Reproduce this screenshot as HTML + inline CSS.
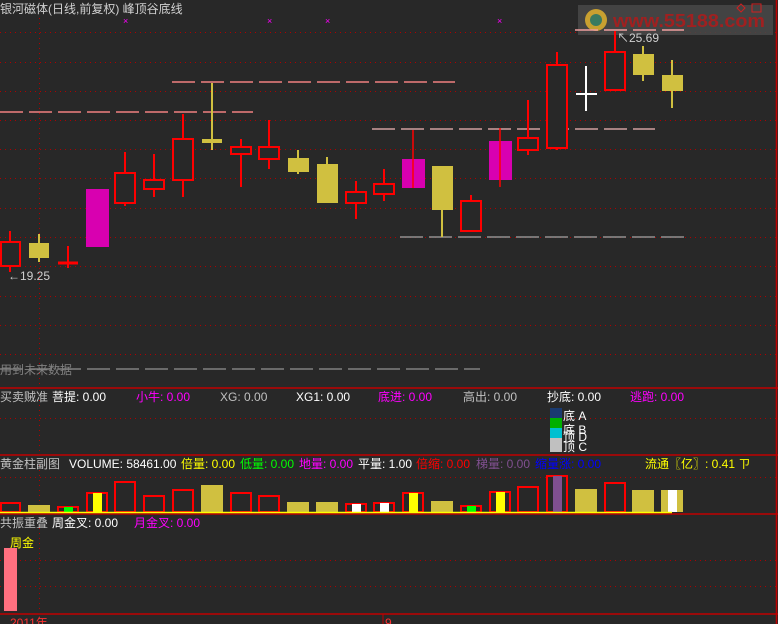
<!DOCTYPE html>
<html><head><meta charset="utf-8"><style>
html,body{margin:0;padding:0;background:#282828;width:778px;height:624px;overflow:hidden}
svg{display:block}
text{font-family:"Liberation Sans","Noto Sans CJK SC",sans-serif;font-size:12px}
</style></head><body>
<svg width="778" height="624" xmlns="http://www.w3.org/2000/svg">
<rect width="778" height="624" fill="#282828"/>
<g stroke="#b00000" stroke-width="1" stroke-dasharray="1,4">
<line x1="0" y1="32.5" x2="776" y2="32.5"/>
<line x1="0" y1="62.5" x2="776" y2="62.5"/>
<line x1="0" y1="91.5" x2="776" y2="91.5"/>
<line x1="0" y1="120.5" x2="776" y2="120.5"/>
<line x1="0" y1="149.5" x2="776" y2="149.5"/>
<line x1="0" y1="178.5" x2="776" y2="178.5"/>
<line x1="0" y1="208.5" x2="776" y2="208.5"/>
<line x1="0" y1="237.5" x2="776" y2="237.5"/>
<line x1="0" y1="266.5" x2="776" y2="266.5"/>
<line x1="0" y1="296.5" x2="776" y2="296.5"/>
<line x1="0" y1="325.5" x2="776" y2="325.5"/>
<line x1="0" y1="354.5" x2="776" y2="354.5"/>
<line x1="0" y1="418.5" x2="776" y2="418.5"/>
<line x1="0" y1="477.5" x2="776" y2="477.5"/>
<line x1="0" y1="560.5" x2="776" y2="560.5"/>
<line x1="0" y1="586.5" x2="776" y2="586.5"/>
<line x1="39.5" y1="18" x2="39.5" y2="388"/>
<line x1="39.5" y1="400" x2="39.5" y2="455"/>
<line x1="39.5" y1="465" x2="39.5" y2="512"/>
<line x1="39.5" y1="528" x2="39.5" y2="612"/>
</g>
<g stroke="#c00000" stroke-width="1.5">
<line x1="0" y1="388" x2="778" y2="388"/>
<line x1="0" y1="455" x2="778" y2="455"/>
<line x1="0" y1="514" x2="778" y2="514"/>
<line x1="0" y1="614" x2="778" y2="614"/>
<line x1="776.5" y1="0" x2="776.5" y2="624"/>
</g>
<rect x="578" y="5" width="195" height="30" fill="#484848" opacity="0.85"/>
<circle cx="596" cy="20" r="11" fill="#c8a030"/>
<circle cx="596" cy="20" r="6" fill="#3a7a60"/>
<text x="613" y="27" fill="#a02020" textLength="152" lengthAdjust="spacingAndGlyphs" style="font-size:18px;font-weight:bold">www.55188.com</text>
<rect x="752" y="4" width="9" height="8" fill="none" stroke="#d02020"/>
<path d="M741 4 l4 4 -4 4 -4 -4z" fill="none" stroke="#d02020"/>
<g stroke-width="1.5" stroke-dasharray="23,6">
<line x1="172" y1="82" x2="455" y2="82" stroke="#f08080"/>
<line x1="0" y1="112" x2="253" y2="112" stroke="#f08080"/>
<line x1="372" y1="129" x2="655" y2="129" stroke="#d0a0a0"/>
<line x1="400" y1="237" x2="684" y2="237" stroke="#909090"/>
<line x1="575" y1="30" x2="684" y2="30" stroke="#f0a0a0"/>
<line x1="0" y1="369" x2="480" y2="369" stroke="#808080"/>
</g>
<g fill="#ff00ff"><text x="123" y="24" style="font-size:9px">×</text><text x="267" y="24" style="font-size:9px">×</text><text x="325" y="24" style="font-size:9px">×</text><text x="497" y="24" style="font-size:9px">×</text></g>
<g stroke="#ff0000" stroke-width="2" fill="none">
<line x1="10" y1="231" x2="10" y2="272"/><rect x="1" y="242" width="19" height="24" fill="#282828"/>
<line x1="68" y1="246" x2="68" y2="268"/><line x1="58" y1="263" x2="78" y2="263" stroke-width="3"/>
<line x1="125" y1="152" x2="125" y2="206"/><rect x="115" y="173" width="20" height="30" fill="#282828"/>
<line x1="154" y1="154" x2="154" y2="197"/><rect x="144" y="180" width="20" height="9" fill="#282828"/>
<line x1="183" y1="114" x2="183" y2="197"/><rect x="173" y="139" width="20" height="41" fill="#282828"/>
<line x1="241" y1="139" x2="241" y2="187"/><rect x="231" y="147" width="20" height="7" fill="#282828"/>
<line x1="269" y1="120" x2="269" y2="169"/><rect x="259" y="147" width="20" height="12" fill="#282828"/>
<line x1="356" y1="181" x2="356" y2="219"/><rect x="346" y="192" width="20" height="11" fill="#282828"/>
<line x1="384" y1="169" x2="384" y2="201"/><rect x="374" y="184" width="20" height="10" fill="#282828"/>
<line x1="471" y1="195" x2="471" y2="201"/><rect x="461" y="201" width="20" height="30" fill="#282828"/>
<line x1="528" y1="100" x2="528" y2="155"/><rect x="518" y="138" width="20" height="12" fill="#282828"/>
<line x1="557" y1="52" x2="557" y2="150"/><rect x="547" y="65" width="20" height="83" fill="#282828"/>
<line x1="615" y1="31" x2="615" y2="52"/><rect x="605" y="52" width="20" height="38" fill="#282828"/>
</g>
<g fill="#d0c040" stroke="#d0c040" stroke-width="2">
<line x1="39" y1="234" x2="39" y2="262"/><rect x="29" y="243" width="20" height="15" stroke="none"/>
<line x1="212" y1="83" x2="212" y2="150"/><rect x="202" y="139" width="20" height="4" stroke="none"/>
<line x1="298" y1="150" x2="298" y2="174"/><rect x="288" y="158" width="21" height="14" stroke="none"/>
<line x1="327" y1="157" x2="327" y2="165"/><rect x="317" y="164" width="21" height="39" stroke="none"/>
<line x1="442" y1="167" x2="442" y2="237"/><rect x="432" y="166" width="21" height="44" stroke="none"/>
<line x1="643" y1="46" x2="643" y2="81"/><rect x="633" y="54" width="21" height="21" stroke="none"/>
<line x1="672" y1="60" x2="672" y2="108"/><rect x="662" y="75" width="21" height="16" stroke="none"/>
</g>
<g fill="#d800b0">
<rect x="86" y="189" width="23" height="58"/>
<rect x="402" y="159" width="23" height="29"/>
<rect x="489" y="141" width="23" height="39"/>
</g>
<g stroke="#ff0000" stroke-width="1.5"><line x1="413" y1="130" x2="413" y2="188"/><line x1="500" y1="128" x2="500" y2="187"/></g>
<g stroke="#ffffff" stroke-width="2"><line x1="586" y1="66" x2="586" y2="111"/><line x1="576" y1="94" x2="597" y2="94"/></g>
<text x="617" y="42" fill="#d0d0d0">↖25.69</text>
<text x="8" y="280" fill="#d0d0d0">←19.25</text>
<text x="0" y="374" fill="#808080">用到未来数据</text>
<text x="0" y="13" fill="#d0d0d0">银河磁体(日线,前复权) 峰顶谷底线</text>
<text x="0" y="401" fill="#c0c0c0">买卖贼准</text>
<text x="52" y="401" fill="#ffffff">菩提: 0.00</text>
<text x="136" y="401" fill="#ff00ff">小牛: 0.00</text>
<text x="220" y="401" fill="#c0c0c0">XG: 0.00</text>
<text x="296" y="401" fill="#ffffff">XG1: 0.00</text>
<text x="378" y="401" fill="#ff00ff">底进: 0.00</text>
<text x="463" y="401" fill="#c0c0c0">高出: 0.00</text>
<text x="547" y="401" fill="#ffffff">抄底: 0.00</text>
<text x="630" y="401" fill="#ff00ff">逃跑: 0.00</text>
<rect x="550" y="408" width="12" height="10" fill="#1a3a70"/>
<rect x="550" y="418" width="12" height="10" fill="#00b000"/>
<rect x="550" y="428" width="12" height="10" fill="#00c0d0"/>
<rect x="550" y="438" width="12" height="14" fill="#c0c0c0"/>
<text x="563" y="420" fill="#ffffff">底 A</text>
<text x="563" y="434" fill="#ffffff">底 B</text>
<text x="563" y="441" fill="#ffffff">顶 D</text>
<text x="563" y="451" fill="#ffffff">顶 C</text>
<text x="0" y="468" fill="#c0c0c0">黄金柱副图</text>
<text x="69" y="468" fill="#ffffff">VOLUME: 58461.00</text>
<text x="181" y="468" fill="#ffff00">倍量: 0.00</text>
<text x="240" y="468" fill="#00ff00">低量: 0.00</text>
<text x="299" y="468" fill="#ff00ff">地量: 0.00</text>
<text x="358" y="468" fill="#ffffff">平量: 1.00</text>
<text x="416" y="468" fill="#ff0000">倍缩: 0.00</text>
<text x="476" y="468" fill="#805090">梯量: 0.00</text>
<text x="535" y="468" fill="#0000ff">缩量涨: 0.00</text>
<text x="645" y="468" fill="#ffff00">流通〖亿〗: 0.41 ㄗ</text>
<g stroke="#ff0000" stroke-width="2" fill="#282828">
<rect x="1" y="503" width="19" height="9"/>
<rect x="58" y="507" width="20" height="5"/>
<rect x="87" y="493" width="20" height="19"/>
<rect x="115" y="482" width="20" height="30"/>
<rect x="144" y="496" width="20" height="16"/>
<rect x="173" y="490" width="20" height="22"/>
<rect x="231" y="493" width="20" height="19"/>
<rect x="259" y="496" width="20" height="16"/>
<rect x="346" y="504" width="20" height="8"/>
<rect x="374" y="503" width="20" height="9"/>
<rect x="403" y="493" width="20" height="19"/>
<rect x="461" y="506" width="20" height="6"/>
<rect x="490" y="492" width="20" height="20"/>
<rect x="518" y="487" width="20" height="25"/>
<rect x="547" y="476" width="20" height="36"/>
<rect x="605" y="483" width="20" height="29"/>
</g>
<g fill="#d0c040">
<rect x="28" y="505" width="22" height="7"/>
<rect x="201" y="485" width="22" height="27"/>
<rect x="287" y="502" width="22" height="10"/>
<rect x="316" y="502" width="22" height="10"/>
<rect x="431" y="501" width="22" height="11"/>
<rect x="575" y="489" width="22" height="23"/>
<rect x="632" y="490" width="22" height="22"/>
<rect x="661" y="490" width="22" height="22"/>
</g>
<rect x="64" y="507" width="9" height="5" fill="#00ff00"/>
<rect x="93" y="493" width="9" height="19" fill="#ffff00"/>
<rect x="352" y="504" width="9" height="8" fill="#ffffff"/>
<rect x="380" y="503" width="9" height="9" fill="#ffffff"/>
<rect x="409" y="493" width="9" height="19" fill="#ffff00"/>
<rect x="467" y="506" width="9" height="6" fill="#00ff00"/>
<rect x="496" y="492" width="9" height="20" fill="#ffff00"/>
<rect x="553" y="476" width="9" height="36" fill="#805090"/>
<rect x="668" y="490" width="9" height="22" fill="#ffffff"/>
<line x1="0" y1="512.5" x2="672" y2="512.5" stroke="#ffff00" stroke-width="1.5"/>
<text x="0" y="527" fill="#c0c0c0">共振重叠</text>
<text x="52" y="527" fill="#ffffff">周金叉: 0.00</text>
<text x="134" y="527" fill="#ff00ff">月金叉: 0.00</text>
<text x="10" y="547" fill="#ffff00">周金</text>
<rect x="4" y="548" width="13" height="63" fill="#ff7080"/>
<text x="10" y="627" fill="#ff3030">2011年</text>
<line x1="383" y1="614" x2="383" y2="624" stroke="#c00000"/>
<text x="385" y="627" fill="#ff3030">9</text>
</svg>
</body></html>
